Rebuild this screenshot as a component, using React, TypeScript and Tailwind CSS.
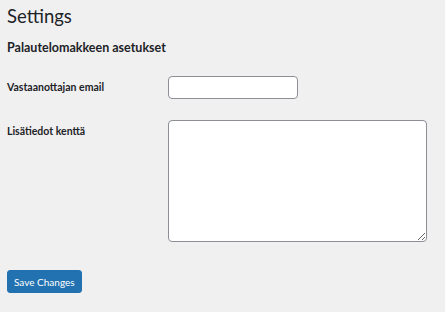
import React from 'react'

const font = { fontFamily: 'Lato, "Noto Sans", sans-serif' }

const App: React.FC = () => {
  return (
    <div className="w-[445px] h-[312px] bg-[#f0f0f1] text-[#1d2327] overflow-hidden" style={font}>
      <div className="pl-[7px] pt-[4px] flex flex-col items-start">
        <h1 className="text-[18.5px] leading-[24px] font-normal">Settings</h1>
        <h2 className="mt-[11px] text-[12.5px] leading-[18px] font-bold">Palautelomakkeen asetukset</h2>

        <div className="mt-[19px] flex items-start">
          <label className="w-[161px] pt-[4px] text-[10.5px] leading-[14px] font-bold">Vastaanottajan email</label>
          <input
            type="text"
            readOnly
            className="w-[130px] h-[23px] bg-white border border-[#8c8f94] rounded-[4px] outline-none"
          />
        </div>

        <div className="mt-[21px] flex items-start">
          <label className="w-[161px] pt-[4px] text-[10.5px] leading-[14px] font-bold">Lisätiedot kenttä</label>
          <textarea
            readOnly
            className="w-[259px] h-[122px] bg-white border border-[#8c8f94] rounded-[4px] outline-none resize"
          />
        </div>

        <button className="mt-[28px] h-[23px] px-[6px] bg-[#2271b1] text-white text-[10px] leading-[14px] rounded-[3px] border border-[#2271b1]">
          Save Changes
        </button>
      </div>
    </div>
  )
}

export default App
